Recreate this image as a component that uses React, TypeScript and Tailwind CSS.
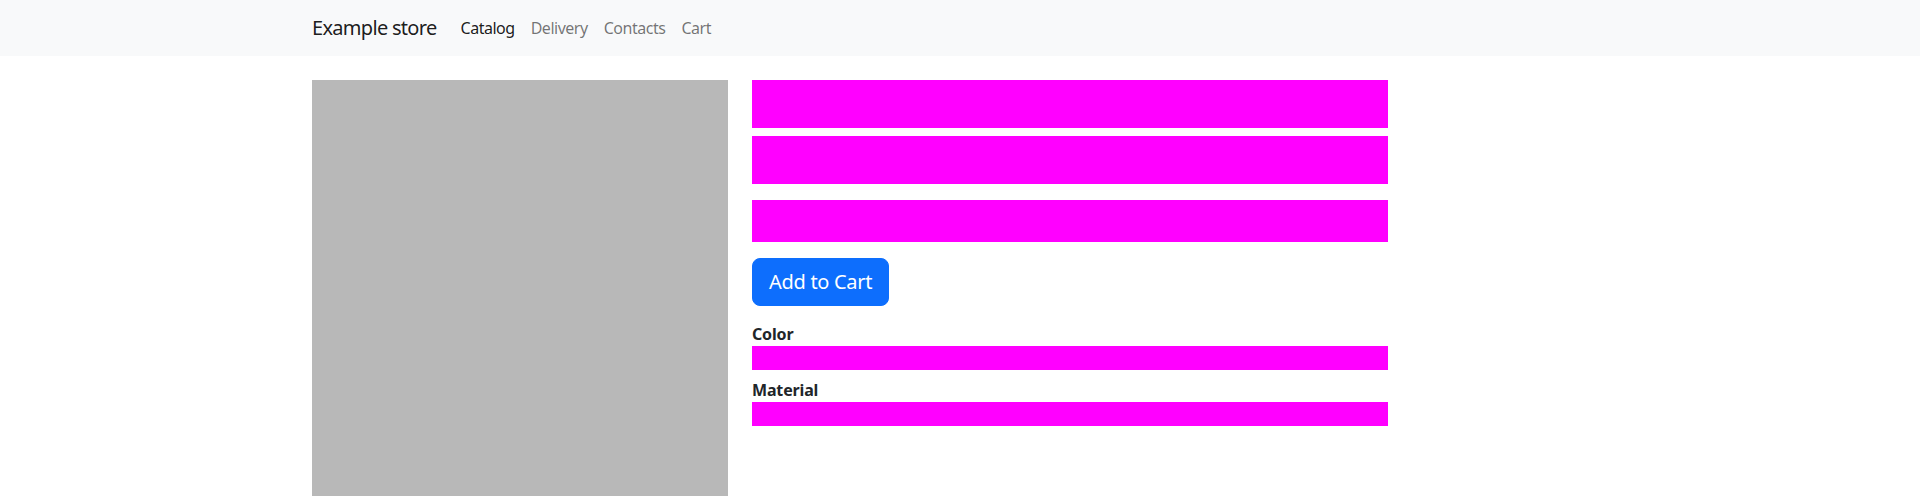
export default function App() {
  const font = { fontFamily: '"Segoe UI", "Noto Sans", "Liberation Sans", sans-serif' };
  return (
    <div className="min-h-[496px] bg-white text-[#212529]" style={font}>
      <nav className="bg-[#f8f9fa] py-2">
        <div className="mx-auto w-[1320px] px-3 flex items-center">
          <a className="text-[20px] leading-[30px] py-[5px] mr-4 text-black/90 tracking-[-0.035em]">Example store</a>
          <ul className="flex tracking-[-0.03em]">
            <li><a className="block px-2 py-2 text-[16px] leading-6 text-black/90">Catalog</a></li>
            <li><a className="block px-2 py-2 text-[16px] leading-6 text-black/55">Delivery</a></li>
            <li><a className="block px-2 py-2 text-[16px] leading-6 text-black/55">Contacts</a></li>
            <li><a className="block px-2 py-2 text-[16px] leading-6 text-black/55">Cart</a></li>
          </ul>
        </div>
      </nav>
      <div className="mx-auto w-[1320px] px-3 mt-6 flex gap-6">
        <div className="w-[416px] h-[440px] bg-[#b8b8b8] shrink-0"></div>
        <div className="w-[636px] flex flex-col">
          <div className="h-12 bg-[#ff00ff]"></div>
          <div className="h-12 bg-[#ff00ff] mt-2"></div>
          <div className="h-[42px] bg-[#ff00ff] mt-4"></div>
          <div className="mt-4">
            <button className="h-12 px-4 rounded-lg bg-[#0d6efd] text-white text-[20px] leading-[30px] border border-[#0d6efd] tracking-[-0.015em]">Add to Cart</button>
          </div>
          <div className="mt-4 font-bold text-[16px] leading-6 tracking-[-0.01em]">Color</div>
          <div className="h-6 bg-[#ff00ff]"></div>
          <div className="mt-2 font-bold text-[16px] leading-6 tracking-[-0.01em]">Material</div>
          <div className="h-6 bg-[#ff00ff]"></div>
        </div>
      </div>
    </div>
  );
}
